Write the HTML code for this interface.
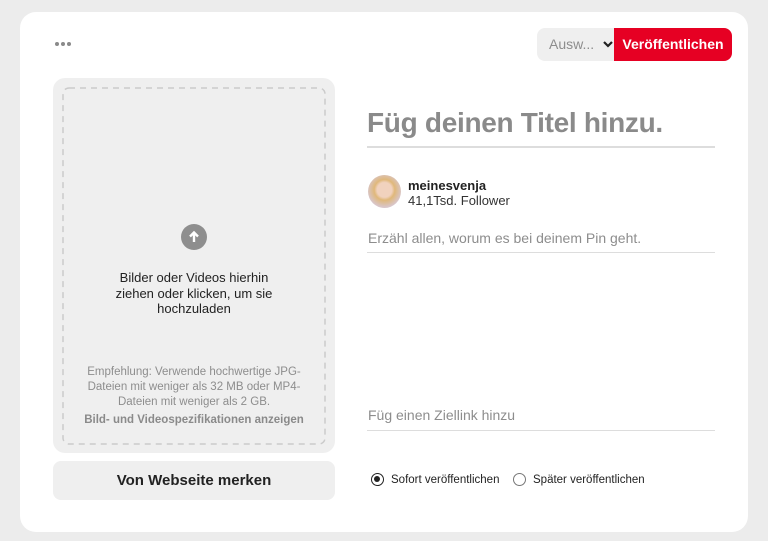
<!DOCTYPE html>
<html><head><meta charset="utf-8"><style>
*{margin:0;padding:0;box-sizing:border-box}
body{width:768px;height:541px;background:#ececec;font-family:"Liberation Sans",sans-serif;position:relative;overflow:hidden}
.card{position:absolute;left:20px;top:12px;width:728px;height:520px;background:#fff;border-radius:16px}
.a{position:absolute}
</style></head><body>
<div class="card"></div>
<div class="a" style="left:55px;top:42px;display:flex;gap:2px">
<span style="width:4px;height:4px;border-radius:50%;background:#8a8a8a"></span><span style="width:4px;height:4px;border-radius:50%;background:#8a8a8a"></span><span style="width:4px;height:4px;border-radius:50%;background:#8a8a8a"></span></div>
<div class="a" style="left:537px;top:28px;width:78px;height:33px;background:#efefef;border-radius:8px 0 0 8px;color:#8d8d8d;font-size:14px;line-height:33px;padding-left:12px">Ausw... <svg width="12" height="10" viewBox="0 0 12 10" style="margin-left:4px"><path d="M2 3l4 4 4-4" stroke="#222" stroke-width="2.2" fill="none"/></svg></div>
<div class="a" style="left:614px;top:28px;width:118px;height:33px;background:#e60023;border-radius:0 8px 8px 0;color:#fff;font-size:14px;font-weight:bold;line-height:33px;text-align:center">Veröffentlichen</div>
<div class="a" style="left:53px;top:78px;width:282px;height:375px;background:#efefef;border-radius:12px"></div>
<svg class="a" style="left:62px;top:87px" width="264" height="358"><rect x="1" y="1" width="262" height="356" rx="6" fill="none" stroke="#cbcbcb" stroke-width="1.5" stroke-dasharray="6 5"/></svg>
<div class="a" style="left:181px;top:224px;width:26px;height:26px;border-radius:50%;background:#8e8e8e"><svg width="26" height="26" viewBox="0 0 26 26"><path d="M13 18V9M9 12.5l4-4 4 4" stroke="#fff" stroke-width="2.4" fill="none"/></svg></div>
<div class="a" style="left:63px;top:270px;width:262px;text-align:center;font-size:13px;line-height:15.5px;color:#222">Bilder oder Videos hierhin<br>ziehen oder klicken, um sie<br>hochzuladen</div>
<div class="a" style="left:63px;top:365px;width:262px;text-align:center;font-size:11.5px;line-height:15px;color:#8d8d8d">Empfehlung: Verwende hochwertige JPG-<br>Dateien mit weniger als 32 MB oder MP4-<br>Dateien mit weniger als 2 GB.</div>
<div class="a" style="left:63px;top:414px;width:262px;text-align:center;font-size:11.5px;font-weight:bold;color:#8a8a8a">Bild- und Videospezifikationen anzeigen</div>
<div class="a" style="left:53px;top:461px;width:282px;height:39px;background:#efefef;border-radius:8px;text-align:center;line-height:39px;font-size:15px;font-weight:bold;color:#222">Von Webseite merken</div>
<div class="a" style="left:367px;top:107px;font-size:28px;font-weight:bold;color:#8a8a8a;letter-spacing:-0.3px">Füg deinen Titel hinzu.</div>
<div class="a" style="left:367px;top:146px;width:348px;height:1.5px;background:#ddd"></div>
<div class="a" style="left:368px;top:175px;width:33px;height:33px;border-radius:50%;background:radial-gradient(circle at 50% 45%,#f1d2be 0 30%,#e0b87a 42%,#d9c6c9 70%)"></div>
<div class="a" style="left:408px;top:178px;font-size:13px;font-weight:bold;color:#222">meinesvenja</div>
<div class="a" style="left:408px;top:193px;font-size:13px;color:#333">41,1Tsd. Follower</div>
<div class="a" style="left:368px;top:230px;font-size:14px;color:#8d8d8d">Erzähl allen, worum es bei deinem Pin geht.</div>
<div class="a" style="left:367px;top:252px;width:348px;height:1px;background:#ddd"></div>
<div class="a" style="left:368px;top:407px;font-size:14px;color:#8d8d8d">Füg einen Ziellink hinzu</div>
<div class="a" style="left:367px;top:430px;width:348px;height:1px;background:#ddd"></div>
<div class="a" style="left:371px;top:473px;width:13px;height:13px;border-radius:50%;border:1.5px solid #222;"><div style="margin:2px;width:6px;height:6px;border-radius:50%;background:#222"></div></div>
<div class="a" style="left:391px;top:474px;font-size:11.5px;color:#222">Sofort veröffentlichen</div>
<div class="a" style="left:513px;top:473px;width:13px;height:13px;border-radius:50%;border:1.2px solid #777"></div>
<div class="a" style="left:533px;top:474px;font-size:11.5px;color:#222">Später veröffentlichen</div>
</body></html>
